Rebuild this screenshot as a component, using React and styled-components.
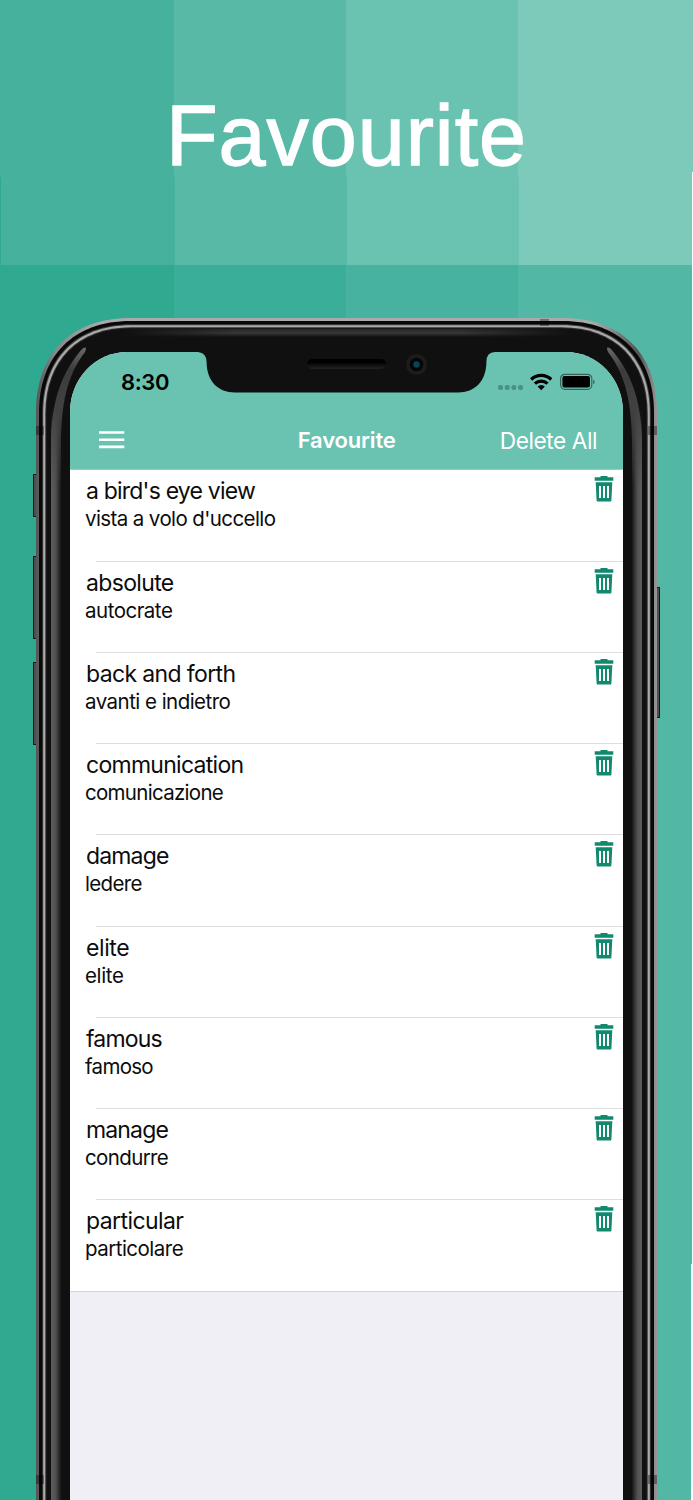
import styled, { createGlobalStyle } from 'styled-components';

const GlobalStyle = createGlobalStyle`
  * {
    box-sizing: border-box;
  }
  body {
    margin: 0;
    font-family: Inter, 'Liberation Sans', sans-serif;
  }
`;

const Page = styled.div`
  position: relative;
  display: flex;
  flex-direction: column;
  width: 693px;
  height: 1500px;
  overflow: hidden;
  background:
    linear-gradient(#fff, #fff) 692px 172px / 1px 1092px no-repeat,
    linear-gradient(#fff, #fff) 691px 1264px / 2px 236px no-repeat,
    linear-gradient(90deg, #31a992 1px, #46b19d 1px 175px, #58b9a7 175px 347px, #6ac2b1 347px 519px, #7ecaba 519px)
      0 177px / 100% 88px no-repeat,
    linear-gradient(90deg, #46b19d 174px, #58b9a7 174px 346px, #6ac2b1 346px 518px, #7ecaba 518px)
      0 0 / 100% 177px no-repeat,
    linear-gradient(90deg, #30a991 174px, #3bae99 174px 346px, #46b29f 346px 518px, #52b7a4 518px);
`;

const Heading = styled.h1`
  height: 318px;
  margin: 0;
  padding-top: 86px;
  color: #fff;
  font-family: 'Liberation Sans', Arial, sans-serif;
  font-size: 84.5px;
  font-weight: 400;
  line-height: 100px;
  letter-spacing: 1px;
  text-align: center;
  -webkit-text-stroke: 1.3px #fff;
`;

const Phone = styled.div`
  position: relative;
  flex: none;
  width: 625px;
  height: 1182px;
  margin-left: 34px;
  padding: 34px 36px 0;
`;

const Frame = styled.svg`
  position: absolute;
  top: 0;
  left: -2px;
`;

const Screen = styled.div`
  position: relative;
  width: 553px;
  height: 1148px;
  overflow: hidden;
  border-radius: 57px 57px 0 0 / 60px 60px 0 0;
  background: #efeff5;
`;

const Notch = styled.svg`
  position: absolute;
  top: 0;
  left: 128px;
`;

const Header = styled.header`
  height: 117.4px;
  background: #6ac2b1;
`;

const StatusBar = styled.div`
  display: flex;
  align-items: center;
  justify-content: space-between;
  height: 60px;
  padding: 0 27px 0 51px;
`;

const Time = styled.span`
  font-size: 22px;
  font-weight: 600;
  letter-spacing: -0.4px;
`;

const NavBar = styled.nav`
  display: grid;
  grid-template-columns: 1fr auto 1fr;
  align-items: center;
  height: 56px;
  padding: 0 26px 0 29px;
  color: #fff;
`;

const NavTitle = styled.h2`
  margin: 0 2.6px 0 0;
  font-size: 22px;
  font-weight: 600;
  letter-spacing: -0.15px;
`;

const DeleteAll = styled.button`
  justify-self: end;
  padding: 0;
  border: 0;
  background: none;
  color: #fff;
  font: inherit;
  font-size: 22.7px;
  letter-spacing: -0.45px;
`;

const List = styled.ul`
  margin: 0;
  padding: 0;
  list-style: none;
  background: #fff;
  border-top: 1px solid #b4c0bd;
  border-bottom: 1px solid #d6d6da;
`;

const Row = styled.li`
  display: flex;
  justify-content: space-between;
  height: 91.25px;
  padding: 5px 9px 0 15px;
  background: linear-gradient(#dedee0, #dedee0) 26px 100% / 100% 1px no-repeat;

  &:last-child {
    height: 90.3px;
    background: none;
  }
`;

const Word = styled.div`
  padding-left: 1px;
  color: #0c0c0c;
  font-size: 23px;
  line-height: 32px;
  letter-spacing: ${({ $spacing }) => $spacing}px;
  white-space: nowrap;
`;

const Translation = styled.div`
  color: #0c0c0c;
  font-size: 20.5px;
  line-height: 24px;
  letter-spacing: ${({ $spacing }) => $spacing}px;
  white-space: nowrap;
`;

const words = [
  { word: 'a bird\'s eye view', translation: 'vista a volo d\'uccello', spacing: [-0.8, -0.6] },
  { word: 'absolute', translation: 'autocrate', spacing: [-0.65, -0.5] },
  { word: 'back and forth', translation: 'avanti e indietro', spacing: [-0.63, -0.53] },
  { word: 'communication', translation: 'comunicazione', spacing: [-0.72, -0.7] },
  { word: 'damage', translation: 'ledere', spacing: [-0.85, -0.65] },
  { word: 'elite', translation: 'elite', spacing: [-0.4, -0.35] },
  { word: 'famous', translation: 'famoso', spacing: [-0.8, -0.7] },
  { word: 'manage', translation: 'condurre', spacing: [-0.85, -0.63] },
  { word: 'particular', translation: 'particolare', spacing: [-0.58, -0.52] },
];

const TrashIcon = () => (
  <svg width='20' height='28' viewBox='0 0 20 28'>
    <path
      fill='#10896f'
      fillRule='evenodd'
      d='M6.500 1h7v1.300H19.300V5.700H.7V2.300H6.500zM1.700 7.300h16.600l-.9 18.200q-.1 1-1 1H3.600q-.9 0-1-1zM5 11v12h2V11zM9 11v12h2V11zM13 11v12h2V11z'
    />
  </svg>
);

const MenuIcon = () => (
  <svg width='26' height='19' viewBox='0 0 26 19'>
    <path stroke='#fff' strokeWidth='2.600' d='M0 1.500H25.300M0 8.700H25.300M0 15.900H25.300' />
  </svg>
);

const StatusIcons = () => (
  <svg width='98' height='20' viewBox='0 0 98 20'>
    <g fill='#4c9284'>
      <rect x='0' y='13' width='5' height='5' rx='2' />
      <rect x='6.700' y='13' width='5' height='5' rx='2' />
      <rect x='13.400' y='13' width='5' height='5' rx='2' />
      <rect x='20' y='13' width='5' height='5' rx='2' />
    </g>
    <g fill='none' stroke='#000' strokeWidth='3.200'>
      <path d='M33.200 7.500a14.200 14.200 0 0 1 20 0' />
      <path d='M36.900 11.700a9 9 0 0 1 12.600 0' />
    </g>
    <path d='M39.600 14.600a5 5 0 0 1 7.200 0l-3.600 3.600z' />
    <rect x='62.600' y='2.300' width='31.200' height='15' rx='4.200' fill='none' stroke='#33665b' strokeWidth='1.200' />
    <rect x='64.400' y='4.100' width='27.600' height='11.400' rx='2' />
    <path fill='#33665b' d='M95.200 7.600q3 2.300 0 4.600z' />
  </svg>
);

// Traces a smooth rounded outline running off the bottom, inset on every side by n
const outline = (n) => {
  const l = 2 + n;
  const r = 623 - n;
  const k = 94 - n * 0.85;
  return `M${l} 1190V${n + k}C${l} ${n + k * 0.38} ${l + k * 0.38} ${n} ${l + k} ${n}H${r - k}C${r - k * 0.38} ${n} ${r} ${n + k * 0.38} ${r} ${n + k}V1190Z`;
};

const Reflection = () => (
  <>
    <path fill='url(#glint)' d='M19 1190V121C20 80 31 53 50 31Q56 27 53 34C35 57 29 87 29 126V1190z' />
    <rect x='19' y='90' width='10.500' height='1100' fill='url(#fade)' mask='url(#ease)' />
  </>
);

const PhoneFrame = () => (
  <Frame width='629' height='1182' viewBox='0 0 629 1182'>
    <defs>
      <linearGradient id='rim' x1='0' x2='1' y1='0' y2='0'>
        <stop offset='0' stopColor='#555' />
        <stop offset='.03' stopColor='#888' />
        <stop offset='.1' stopColor='#aaa' />
        <stop offset='.9' stopColor='#aaa' />
        <stop offset='.97' stopColor='#555' />
        <stop offset='1' stopColor='#9a9495' />
      </linearGradient>
      <linearGradient id='glint' gradientUnits='userSpaceOnUse' x1='54' x2='24' y1='30' y2='110'>
        <stop offset='0' stopColor='#6a6a6a' />
        <stop offset='.3' stopColor='#3c3c3c' />
        <stop offset='1' stopColor='#444' />
      </linearGradient>
      <linearGradient id='fade' x1='0' x2='1' y1='0' y2='0'>
        <stop offset='0' stopColor='#5e5e5e' />
        <stop offset='.45' stopColor='#505050' />
        <stop offset='1' stopColor='#111' />
      </linearGradient>
      <linearGradient id='easing' gradientUnits='userSpaceOnUse' x1='0' x2='0' y1='90' y2='170'>
        <stop offset='0' stopColor='#000' />
        <stop offset='1' stopColor='#fff' />
      </linearGradient>
      <mask id='ease' maskUnits='userSpaceOnUse' x='0' y='80' width='60' height='1110'>
        <rect x='0' y='80' width='60' height='1110' fill='url(#easing)' />
      </mask>
      <linearGradient id='top' x1='0' x2='0' y1='0' y2='1'>
        <stop offset='0' stopColor='#252525' />
        <stop offset='.5' stopColor='#383838' />
        <stop offset='1' stopColor='#111' />
      </linearGradient>
      <linearGradient id='ends' x1='0' x2='1' y1='0' y2='0'>
        <stop offset='0' stopColor='#101010' />
        <stop offset='.25' stopColor='#101010' stopOpacity='0' />
        <stop offset='.75' stopColor='#101010' stopOpacity='0' />
        <stop offset='1' stopColor='#101010' />
      </linearGradient>
    </defs>
    <g fill='#4e4e4e' stroke='#171717' strokeWidth='1'>
      <rect x='1.500' y='156.500' width='4' height='42' />
      <rect x='1.500' y='238.500' width='4' height='82' />
      <rect x='1.500' y='344.500' width='4' height='82' />
      <rect x='623' y='269.500' width='4.500' height='130' />
    </g>
    <g transform='translate(2 0)'>
      <path d={outline(0)} fill='url(#rim)' />
      <path d={outline(3)} fill='#080808' />
      <path d={outline(6.300)} fill='#444' />
      <path d={outline(7.200)} fill='#aaa' />
      <path d={outline(9.300)} fill='#303030' />
      <path d={outline(10.300)} fill='#101010' />
    </g>
    <path fill='url(#top)' d='M94 11H536L540 19H90z' />
    <path fill='url(#ends)' d='M90 11H540V20H90z' />
    <Reflection />
    <g transform='translate(629 0) scale(-1 1)'>
      <Reflection />
    </g>
    <g fill='#000' opacity='.35'>
      <rect x='4' y='108' width='8' height='9' />
      <rect x='616' y='108' width='9' height='9' />
      <rect x='508' y='1' width='9' height='7' />
      <rect x='4' y='1157' width='8' height='9' />
      <rect x='616' y='1157' width='9' height='9' />
    </g>
  </Frame>
);

const PhoneNotch = () => (
  <Notch width='298' height='42' viewBox='0 0 298 42'>
    <defs>
      <linearGradient id='speaker' x1='0' x2='0' y1='0' y2='1'>
        <stop offset='.3' stopColor='#000' />
        <stop offset='1' stopColor='#222' />
      </linearGradient>
    </defs>
    <path
      fill='#101010'
      d='M0 0Q8.600 1 8.600 10C8.600 29 20 40.500 37 40.500H260C277 40.500 288.400 29 288.400 10Q288.400 0 297 0z'
    />
    <rect x='109' y='7' width='79' height='10' rx='5' fill='url(#speaker)' />
    <circle cx='218.500' cy='12.500' r='10.500' fill='#1c1c1d' />
    <circle cx='218.500' cy='12.500' r='6.700' fill='#040506' />
    <circle cx='218.500' cy='12.500' r='3.200' fill='#0b4450' />
  </Notch>
);

const App = () => {
  return (
    <Page>
      <GlobalStyle />
      <Heading>Favourite</Heading>
      <Phone>
        <PhoneFrame />
        <Screen>
          <Header>
            <StatusBar>
              <Time>8:30</Time>
              <StatusIcons />
            </StatusBar>
            <NavBar>
              <MenuIcon />
              <NavTitle>Favourite</NavTitle>
              <DeleteAll>Delete All</DeleteAll>
            </NavBar>
          </Header>
          <List>
            {words.map(({ word, translation, spacing }) => (
              <Row key={word}>
                <div>
                  <Word $spacing={spacing[0]}>{word}</Word>
                  <Translation $spacing={spacing[1]}>{translation}</Translation>
                </div>
                <TrashIcon />
              </Row>
            ))}
          </List>
          <PhoneNotch />
        </Screen>
      </Phone>
    </Page>
  );
};

export default App;
